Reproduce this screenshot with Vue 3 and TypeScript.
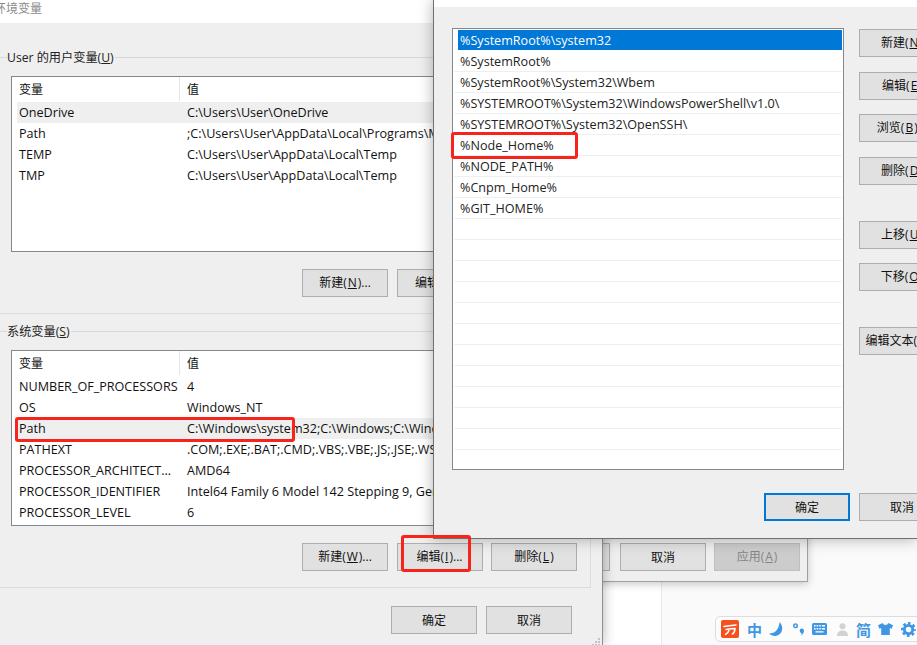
<script setup lang="ts">
interface Row { name: string; value: string; hot?: boolean }
const userRows: Row[] = [
  { name: 'OneDrive', value: 'C:\\Users\\User\\OneDrive', hot: true },
  { name: 'Path', value: ';C:\\Users\\User\\AppData\\Local\\Programs\\Microsoft VS Code\\bin' },
  { name: 'TEMP', value: 'C:\\Users\\User\\AppData\\Local\\Temp' },
  { name: 'TMP', value: 'C:\\Users\\User\\AppData\\Local\\Temp' },
]
const sysRows: Row[] = [
  { name: 'NUMBER_OF_PROCESSORS', value: '4' },
  { name: 'OS', value: 'Windows_NT' },
  { name: 'Path', value: 'C:\\Windows\\system32;C:\\Windows;C:\\Windows\\System32\\Wbem', hot: true },
  { name: 'PATHEXT', value: '.COM;.EXE;.BAT;.CMD;.VBS;.VBE;.JS;.JSE;.WSF;.WSH;.MSC' },
  { name: 'PROCESSOR_ARCHITECT...', value: 'AMD64' },
  { name: 'PROCESSOR_IDENTIFIER', value: 'Intel64 Family 6 Model 142 Stepping 9, GenuineIntel' },
  { name: 'PROCESSOR_LEVEL', value: '6' },
]
const pathItems: string[] = [
  '%SystemRoot%\\system32', '%SystemRoot%', '%SystemRoot%\\System32\\Wbem',
  '%SYSTEMROOT%\\System32\\WindowsPowerShell\\v1.0\\', '%SYSTEMROOT%\\System32\\OpenSSH\\',
  '%Node_Home%', '%NODE_PATH%', '%Cnpm_Home%', '%GIT_HOME%',
  '', '', '', '', '', '', '', '', '', '', '',
]
</script>

<template>
  <div class="desk">
    <div class="page-split"></div>

    <div class="win back">
      <div class="back-foot">
        <button class="btn">确定</button>
        <button class="btn">取消</button>
        <button class="btn off">应用(<u>A</u>)</button>
      </div>
    </div>

    <div class="win left">
      <div class="title">环境变量</div>
      <div class="body">
        <section class="group first">
          <div class="group-head"><span class="tick"></span><span>User 的用户变量(<u>U</u>)</span><span class="rule"></span></div>
          <div class="table">
            <div class="thead"><span class="c1 divider">变量</span><span class="c2">值</span></div>
            <div v-for="r in userRows" :key="r.name" class="trow" :class="{ hot: r.hot }">
              <span class="c1">{{ r.name }}</span><span class="c2">{{ r.value }}</span>
            </div>
          </div>
          <div class="group-btns">
            <button class="btn">新建(<u>N</u>)...</button>
            <button class="btn">编辑(<u>E</u>)...</button>
            <button class="btn">删除(<u>D</u>)</button>
          </div>
        </section>
        <section class="group second">
          <div class="group-head"><span class="tick"></span><span>系统变量(<u>S</u>)</span><span class="rule"></span></div>
          <div class="table">
            <div class="thead"><span class="c1 divider">变量</span><span class="c2">值</span></div>
            <div v-for="r in sysRows" :key="r.name" class="trow" :class="{ hot: r.hot }">
              <span class="c1">{{ r.name }}</span><span class="c2">{{ r.value }}</span>
            </div>
          </div>
          <div class="group-btns">
            <button class="btn">新建(<u>W</u>)...</button>
            <button class="btn">编辑(<u>I</u>)...</button>
            <button class="btn">删除(<u>L</u>)</button>
          </div>
        </section>
        <div class="left-foot">
          <button class="btn">确定</button>
          <button class="btn">取消</button>
        </div>
      </div>
      <svg class="grip" width="9" height="9" viewBox="0 0 9 9"><path d="M6 0h2v2H6zM3 3h2v2H3zM6 3h2v2H6zM0 6h2v2H0zM3 6h2v2H3zM6 6h2v2H6z" fill="#c4c4c4"/></svg>
    </div>

    <div class="win front">
      <div class="front-top"></div>
      <div class="front-main">
        <div class="listbox">
          <div v-for="(p, i) in pathItems" :key="i" class="item" :class="{ sel: i === 0 }"><span>{{ p }}</span></div>
        </div>
        <div class="side">
          <button class="btn">新建(<u>N</u>)</button>
          <button class="btn s1">编辑(<u>E</u>)</button>
          <button class="btn s2">浏览(<u>B</u>)...</button>
          <button class="btn s1">删除(<u>D</u>)</button>
          <button class="btn s3">上移(<u>U</u>)</button>
          <button class="btn s2">下移(<u>O</u>)</button>
          <button class="btn s3">编辑文本(<u>T</u>)...</button>
        </div>
      </div>
      <div class="front-foot">
        <button class="btn primary">确定</button>
        <button class="btn">取消</button>
      </div>
    </div>

    <div class="mark m-path"></div>
    <div class="mark m-node"></div>
    <div class="mark m-edit"></div>

    <div class="ime">
      <svg width="18" height="18" viewBox="0 0 18 18"><rect width="18" height="18" rx="2" fill="#f4511e"/><path d="M3 6.500c4-.8 8-1.200 12-1.500M5 9.500c3-.5 6-.8 9-.9-.2 2.500-1 4.400-2.600 5.400M8.500 9c-.6 2.500-2 4.300-4 5.400" fill="none" stroke="#fff" stroke-width="1.500" stroke-linecap="round"/></svg>
      <span class="ime-ch">中</span>
      <svg width="15" height="14" viewBox="0 0 15 14"><path d="M10.500 0C14.500 4 14 10.500 9.500 13 6 14.800 2.500 13.800 0 11.500 3.500 11.500 6.800 10 8.500 7 9.800 4.700 10.500 2.500 10.500 0z" fill="#3f97e4"/></svg>
      <svg width="11" height="13" viewBox="0 0 11 13"><circle cx="2.500" cy="2.700" r="1.800" fill="none" stroke="#3f97e4" stroke-width="1.500"/><path d="M8.800 5.500a2.200 2.200 0 0 1 2.200 2.300c0 2.200-1.400 3.800-3.300 5 .7-1.100 1-1.900 1-2.700-1.100 0-1.900-.9-1.900-2.100a2.100 2.100 0 0 1 2-2.500z" fill="#3f97e4"/></svg>
      <svg width="15" height="12" viewBox="0 0 15 12"><rect width="15" height="12" rx="1.500" fill="#3f97e4"/><path d="M2 2h1.600v1.600H2zM4.600 2h1.600v1.600H4.600zM7.200 2h1.600v1.600H7.200zM9.800 2h3.200v1.600H9.800zM2 5h1.600v1.600H2zM4.600 5h1.600v1.600H4.600zM7.200 5h1.600v1.600H7.200zM9.800 5h3.200v1.600H9.800zM3.500 8.200h8v1.400h-8z" fill="#fff"/></svg>
      <svg width="11" height="13" viewBox="0 0 11 13"><circle cx="5.500" cy="3.200" r="3" fill="#d2d2d2"/><path d="M0 13c0-3.600 2-5.500 5.500-5.500S11 9.400 11 13z" fill="#d2d2d2"/></svg>
      <span class="ime-ch">简</span>
      <svg width="15" height="12" viewBox="0 0 15 12"><path d="M4.700 0 0 2.200l1.400 3.600L3.200 5v7h8.600V5l1.800.8L15 2.200 10.300 0C9.900 1.300 8.900 2 7.500 2S5.100 1.300 4.700 0z" fill="#3f97e4"/></svg>
      <svg width="15" height="15" viewBox="0 0 16 16"><circle cx="8" cy="8" r="4.500" fill="none" stroke="#3f97e4" stroke-width="3"/><circle cx="8" cy="8" r="6.700" fill="none" stroke="#3f97e4" stroke-width="2.600" stroke-dasharray="2.760 2.500" stroke-dashoffset="1.380"/></svg>
    </div>
  </div>
</template>

<style>
html, body { margin: 0; background: #fff; }
</style>

<style scoped>
.desk {
  position: relative; width: 917px; height: 645px; overflow: hidden; background: #fff;
  font-family: "Open Sans", "Noto Sans CJK SC", sans-serif; font-size: 12px; color: #111;
}
.page-split { position: absolute; left: 661px; top: 0; right: 0; bottom: 0; background: #fafafa; border-left: 1px solid #e8e8e8; }
.win { position: absolute; box-sizing: border-box; background: #efefef; }
.back {
  left: 0; top: 0; width: 808px; height: 582px; border: solid #a0a0a0; border-width: 0 1px 1px 0;
  box-shadow: 0 2px 8px rgba(0,0,0,.22); display: flex; flex-direction: column; justify-content: flex-end;
}
.back-foot { display: flex; justify-content: flex-end; gap: 8px; padding: 0 7px 10px 0; }
.back-foot .btn:nth-child(2) { margin-left: 2px; }
.left {
  left: 0; top: 0; width: 603px; height: 645px; border-right: 1px solid #8f8f8f;
  box-shadow: 0 0 12px rgba(0,0,0,.3); overflow: hidden;
}
.title { height: 22px; background: #fff; color: #8c8c8c; font-size: 12px; line-height: 16px; padding-top: 1px; margin-left: -6px; }
.body { padding-top: 25px; }
.group { box-sizing: content-box; width: 590px; height: 265px; border: solid #dcdcdc; border-width: 0 1px 1px 0; }
.second { margin-top: 8px; }
.group-head { display: flex; align-items: center; height: 18px; color: #222; font-size: 12.2px; }
.tick { width: 7px; height: 1px; background: #d8d8d8; }
.rule { flex: 1; height: 1px; background: #d8d8d8; margin-left: 1px; }
.table {
  box-sizing: border-box; width: 566px; height: 176px; margin: 10px 0 0 11px; background: #fff;
  border: 1px solid #828790; padding-left: 5px;
}
.thead, .trow { display: grid; grid-template-columns: 163px 1fr; white-space: nowrap; overflow: hidden; }
.thead { height: 25px; box-sizing: border-box; line-height: 25px; }
.trow { height: 21px; line-height: 21px; font-size: 12.6px; }
.hot { background: #efefef; }
.c1 { padding-left: 2px; overflow: hidden; }
.c2 { padding-left: 7px; overflow: hidden; }
.divider { border-right: 1px solid #e5e5e5; height: 24px; }
.group-btns { display: flex; justify-content: flex-end; gap: 8.5px; margin: 17px 13px 0 0; }
.left-foot { display: flex; justify-content: flex-end; gap: 9px; padding: 18px 30px 0 0; }
.btn {
  box-sizing: border-box; width: 86px; height: 28px; flex: none; padding: 0; white-space: nowrap;
  background: #e1e1e1; border: 1px solid #adadad; color: #111; font: inherit; display: flex; align-items: center; justify-content: center;
}
.btn:has(u) { padding-bottom: 2px; }
.btn u { margin: 0 1px; }
.off { background: #cccccc; color: #858585; border-color: #bfbfbf; }
.primary { border: 2px solid #0078d7; }
.grip { position: absolute; right: 1px; bottom: -2px; }
.front {
  left: 433px; top: 0; width: 484px; height: 539px; border: solid #707070; border-width: 0 0 1px 1px;
  box-shadow: 0 0 14px rgba(0,0,0,.3); overflow: hidden;
}
.front-top { height: 7px; background: #fff; }
.front-main { display: flex; padding: 21px 0 0 18px; gap: 15px; }
.listbox { box-sizing: border-box; width: 392px; height: 442px; flex: none; background: #fff; border: 1px solid #828790; padding: 0 1px 0 1px; }
.item { box-sizing: border-box; height: 21px; padding-left: 4px; border-bottom: 1px solid #efefef; display: flex; }
.item span { flex: 1; padding-left: 2px; line-height: 22px; height: 20px; white-space: nowrap; color: #222; font-size: 12.6px; }
.item.sel span { background: #0078d7; color: #fff; }
.item.sel { border-bottom-color: transparent; height: 22px; padding-top: 1px; }
.side { display: flex; flex-direction: column; padding-top: 1px; }
.s1 { margin-top: 15px; }
.s2 { margin-top: 14px; }
.s3 { margin-top: 36px; }
.front-foot { display: flex; gap: 9px; padding: 23px 0 0 330px; }
.mark { position: absolute; box-sizing: border-box; border: 3px solid #f8231a; border-radius: 3px; }
.m-path { left: 15px; top: 417px; width: 280px; height: 25px; }
.m-node { left: 451px; top: 132px; width: 127px; height: 27px; }
.m-edit { left: 401px; top: 535px; width: 70px; height: 37px; }
.ime {
  position: absolute; left: 715px; top: 616px; width: 210px; height: 26px; box-sizing: border-box;
  background: #fcfcfc; border: 1px solid #ddd; border-radius: 5px; padding-left: 5px;
  display: grid; grid-template-columns: 18px 14px 16px 11px 17px 11px 14px 15px 15px; column-gap: 8px; align-items: center; justify-items: start;
}
.ime-ch { color: #3f97e4; font-size: 15px; font-weight: 700; line-height: 1; font-family: "Noto Sans CJK SC", sans-serif; }
</style>
